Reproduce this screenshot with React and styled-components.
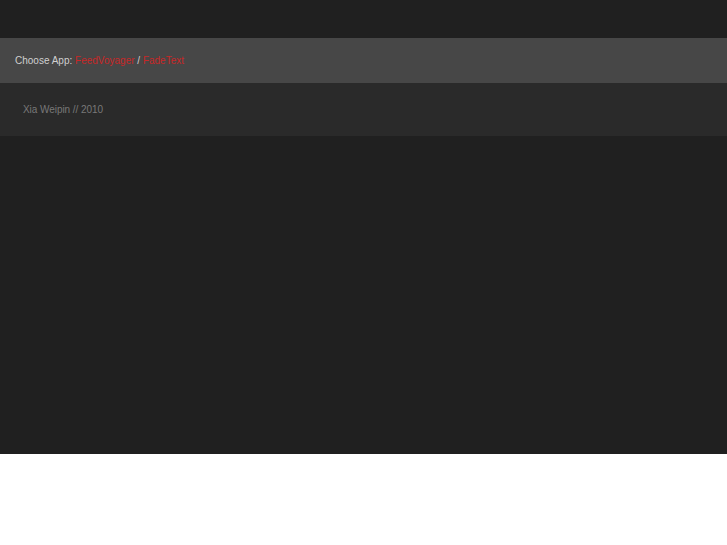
import React from 'react';
import styled, { createGlobalStyle } from 'styled-components';

const GlobalStyle = createGlobalStyle`
  html, body {
    margin: 0;
    padding: 0;
    background: #ffffff;
  }
  body {
    font-family: "Liberation Sans", Arial, sans-serif;
  }
`;

const Page = styled.div`
  display: flex;
  flex-direction: column;
  height: 454px;
  background: #202020;
`;

const TopSpace = styled.div`
  height: 38px;
`;

const AppBar = styled.div`
  display: flex;
  align-items: center;
  height: 45px;
  padding: 0 15px;
  background: #474747;
  color: #d0d0d0;
  font-size: 10px;
  white-space: pre;
`;

const AppLink = styled.a`
  color: #c82828;
  text-decoration: none;
`;

const Credits = styled.div`
  display: flex;
  align-items: center;
  height: 53px;
  padding: 0 23px;
  background: #2a2a2a;
  color: #787878;
  font-size: 10px;
  letter-spacing: -0.05px;
`;

const App = () => {
  return (
    <>
      <GlobalStyle />
      <Page>
        <TopSpace />
        <AppBar>
          {'Choose App: '}
          <AppLink href="#">FeedVoyager</AppLink>
          {' / '}
          <AppLink href="#">FadeText</AppLink>
        </AppBar>
        <Credits>Xia Weipin // 2010</Credits>
      </Page>
    </>
  );
};

export default App;
